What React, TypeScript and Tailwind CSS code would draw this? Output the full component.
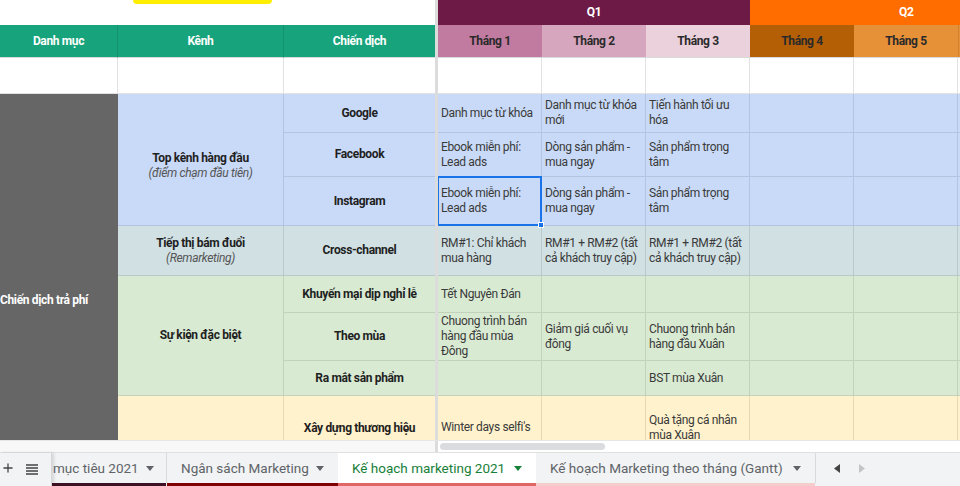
import { Plus } from "lucide-react"

type MonthRow = {
  h: string
  bg: string
  cells: string[]
  selected?: number
}

const monthRows: MonthRow[] = [
  { h: "h-[36px]", bg: "bg-white", cells: ["", "", ""] },
  { h: "h-[39px]", bg: "bg-[#c9daf8]", cells: ["Danh mục từ khóa", "Danh mục từ khóa mới", "Tiến hành tối ưu hóa"] },
  { h: "h-[44px]", bg: "bg-[#c9daf8]", cells: ["Ebook miễn phí: Lead ads", "Dòng sản phẩm - mua ngay", "Sản phẩm trọng tâm"] },
  { h: "h-[49px]", bg: "bg-[#c9daf8]", cells: ["Ebook miễn phí: Lead ads", "Dòng sản phẩm - mua ngay", "Sản phẩm trọng tâm"], selected: 0 },
  { h: "h-[50px]", bg: "bg-[#d0e0e3]", cells: ["RM#1: Chỉ khách mua hàng", "RM#1 + RM#2 (tất cả khách truy cập)", "RM#1 + RM#2 (tất cả khách truy cập)"] },
  { h: "h-[37px]", bg: "bg-[#d9ead3]", cells: ["Tết Nguyên Đán", "", ""] },
  { h: "h-[48px]", bg: "bg-[#d9ead3]", cells: ["Chuong trình bán hàng đầu mùa Đông", "Giảm giá cuối vụ đông", "Chuong trình bán hàng đầu Xuân"] },
  { h: "h-[35px]", bg: "bg-[#d9ead3]", cells: ["", "", "BST mùa Xuân"] },
  { h: "h-[64px]", bg: "bg-[#fff2cc]", cells: ["Winter days selfi's", "", "Quà tặng cá nhân mùa Xuân"] },
]

const months = [
  { label: "Tháng 1", bg: "bg-[#c27ba0]" },
  { label: "Tháng 2", bg: "bg-[#d5a6bd]" },
  { label: "Tháng 3", bg: "bg-[#ead1dc]" },
  { label: "Tháng 4", bg: "bg-[#b45f06]" },
  { label: "Tháng 5", bg: "bg-[#e69138]" },
]

function Caret({ className = "" }: { className?: string }) {
  return (
    <svg width="8" height="5" viewBox="0 0 8 5" className={className}>
      <path d="M0 0h8L4 5z" fill="currentColor" />
    </svg>
  )
}

function Tab({
  label,
  width,
  stripe,
  active,
}: {
  label: string
  width: string
  stripe: string
  active?: boolean
}) {
  return (
    <div className={`${width} shrink-0 flex flex-col ${active ? "bg-white" : ""}`}>
      <div
        className={`h-[30px] flex items-center justify-between pl-[14px] pr-[14px] whitespace-nowrap ${
          active ? "text-[#188038]" : "text-[#5f6368]"
        }`}
      >
        <span>{label}</span>
        <Caret />
      </div>
      <div className={`h-[4px] ${stripe}`} />
    </div>
  )
}

export default function App() {
  return (
    <div className="w-[960px] h-[486px] overflow-hidden bg-white flex flex-col font-['Roboto','Noto_Sans',sans-serif]">
      {/* bảng tính */}
      <div className="h-[440px] flex overflow-hidden shrink-0 tracking-[-0.35px]">
        {/* cột cố định */}
        <div className="w-[435px] shrink-0 grid grid-cols-[118px_166px_151px] grid-rows-[25px_33px_36px_39px_44px_49px_50px_37px_48px_35px_64px] text-[12px] leading-[15px]">
          <div className="col-span-3 row-start-1 bg-white">
            <div className="ml-[133px] w-[139px] h-[4px] bg-[#ffee00] rounded-b-[6px]" />
          </div>

          <div className="col-start-1 row-start-2 bg-[#17a37c] border-r border-black/10 border-b border-b-[#d9d9d9] flex items-center justify-center font-bold text-white">
            Danh mục
          </div>
          <div className="col-start-2 row-start-2 bg-[#17a37c] border-r border-black/10 border-b border-b-[#d9d9d9] flex items-center justify-center font-bold text-white">
            Kênh
          </div>
          <div className="col-start-3 row-start-2 bg-[#17a37c] border-b border-b-[#d9d9d9] flex items-center justify-center font-bold text-white">
            Chiến dịch
          </div>

          <div className="col-start-1 row-start-3 border-r border-b border-[#e2e2e2]" />
          <div className="col-start-2 row-start-3 border-r border-b border-[#e2e2e2]" />
          <div className="col-start-3 row-start-3 border-b border-[#e2e2e2]" />

          <div className="col-start-1 row-start-4 row-span-8 bg-[#666666] flex items-center pt-[46px] font-bold text-white whitespace-nowrap">
            Chiến dịch trả phí
          </div>

          <div className="col-start-2 row-start-4 row-span-3 bg-[#c9daf8] border-r border-b border-black/10 flex flex-col items-center justify-center pt-3 text-[#1f1f1f]">
            <span className="font-bold">Top kênh hàng đầu</span>
            <span className="italic text-[#555]">(điểm chạm đầu tiên)</span>
          </div>
          <div className="col-start-2 row-start-7 bg-[#d0e0e3] border-r border-b border-black/10 flex flex-col items-center justify-center text-[#1f1f1f]">
            <span className="font-bold">Tiếp thị bám đuổi</span>
            <span className="italic text-[#555]">(Remarketing)</span>
          </div>
          <div className="col-start-2 row-start-8 row-span-3 bg-[#d9ead3] border-r border-b border-black/10 flex items-center justify-center font-bold text-[#1f1f1f]">
            Sự kiện đặc biệt
          </div>
          <div className="col-start-2 row-start-11 bg-[#fff2cc] border-r border-black/10" />

          <div className="col-start-3 row-start-4 bg-[#c9daf8] border-b border-black/10 flex items-center justify-center font-bold text-[#1f1f1f]">
            Google
          </div>
          <div className="col-start-3 row-start-5 bg-[#c9daf8] border-b border-black/10 flex items-center justify-center font-bold text-[#1f1f1f]">
            Facebook
          </div>
          <div className="col-start-3 row-start-6 bg-[#c9daf8] border-b border-black/10 flex items-center justify-center font-bold text-[#1f1f1f]">
            Instagram
          </div>
          <div className="col-start-3 row-start-7 bg-[#d0e0e3] border-b border-black/10 flex items-center justify-center font-bold text-[#1f1f1f]">
            Cross-channel
          </div>
          <div className="col-start-3 row-start-8 bg-[#d9ead3] border-b border-black/10 flex items-center justify-center font-bold text-[#1f1f1f]">
            Khuyến mại dịp nghỉ lễ
          </div>
          <div className="col-start-3 row-start-9 bg-[#d9ead3] border-b border-black/10 flex items-center justify-center font-bold text-[#1f1f1f]">
            Theo mùa
          </div>
          <div className="col-start-3 row-start-10 bg-[#d9ead3] border-b border-black/10 flex items-center justify-center font-bold text-[#1f1f1f]">
            Ra mắt sản phẩm
          </div>
          <div className="col-start-3 row-start-11 bg-[#fff2cc] flex items-center justify-center font-bold text-[#1f1f1f]">
            Xây dựng thương hiệu
          </div>
        </div>

        {/* đường cố định */}
        <div className="w-[3px] shrink-0 bg-[#dcdcdc]" />

        {/* các tháng */}
        <div className="flex-1 flex flex-col text-[12px] leading-[15px] overflow-hidden">
          <div className="h-[25px] flex shrink-0 font-bold text-white">
            <div className="w-[312px] shrink-0 bg-[#6e1a47] flex items-center justify-center">Q1</div>
            <div className="flex-1 bg-[#ff6d01] flex items-center pl-[149px]">Q2</div>
          </div>
          <div className="h-[33px] flex shrink-0 font-bold text-[#2a2a2a] border-b border-[#d9d9d9]">
            {months.map((m) => (
              <div key={m.label} className={`w-[104px] shrink-0 ${m.bg} flex items-center justify-center`}>
                {m.label}
              </div>
            ))}
            <div className="flex-1 bg-[#e69138] border-l border-black/10" />
          </div>
          {monthRows.map((row, i) => (
            <div key={i} className={`${row.h} flex shrink-0 ${row.bg} text-[#3a3a3a]`}>
              {[0, 1, 2, 3, 4].map((c) => (
                <div
                  key={c}
                  className={`relative w-[104px] shrink-0 border-r border-b ${
                    row.bg === "bg-white" ? "border-[#e2e2e2]" : "border-black/10"
                  } px-[3px] flex items-center`}
                >
                  <span>{row.cells[c] ?? ""}</span>
                  {row.selected === c && (
                    <div className="absolute -left-px -top-px w-[105px] h-[50px] border-2 border-[#1a73e8]">
                      <div className="absolute -right-[4px] -bottom-[4px] w-[6px] h-[6px] bg-[#1a73e8] border border-white" />
                    </div>
                  )}
                </div>
              ))}
              <div className={`flex-1 border-b ${row.bg === "bg-white" ? "border-[#e2e2e2]" : "border-black/10"}`} />
            </div>
          ))}
        </div>
      </div>

      {/* thanh cuộn ngang */}
      <div className="h-[12px] flex shrink-0 border-t border-[#e6e6e6]">
        <div className="w-[435px] shrink-0 bg-[#f8f8f8]" />
        <div className="w-[3px] shrink-0 bg-[#dcdcdc]" />
        <div className="flex-1 flex items-center pl-[2px]">
          <div className="w-[165px] h-[7px] rounded-full bg-[#dadce0]" />
        </div>
      </div>

      {/* thanh trang tính */}
      <div className="flex-1 flex bg-[#f1f3f4] text-[13.5px] border-t border-[#e0e0e0]">
        <div className="w-[52px] shrink-0 flex items-start pt-[8px] pl-[1px] gap-[11px] text-[#444] border-r border-[#d6d6d6] shadow-[2px_0_3px_rgba(0,0,0,0.12)]">
          <Plus size={14} strokeWidth={2.2} />
          <svg width="12" height="14" viewBox="0 0 12 14" className="mt-[1px]">
            <path d="M0 3h12M0 6h12M0 9h12M0 12h12" stroke="currentColor" strokeWidth="1.6" />
          </svg>
        </div>
        <div className="w-[114px] shrink-0 flex flex-col">
          <div className="h-[30px] flex items-center justify-between pl-[1px] pr-[12px] text-[#5f6368] whitespace-nowrap">
            <span>mục tiêu 2021</span>
            <Caret />
          </div>
          <div className="h-[4px] bg-[#3e1024]" />
        </div>
        <div className="w-px bg-[#dadada] h-[30px]" />
        <Tab label="Ngân sách Marketing" width="w-[171px]" stripe="bg-[#7f0000]" />
        <Tab label="Kế hoạch marketing 2021" width="w-[198px]" stripe="bg-[#e06666]" active />
        <Tab label="Kế hoạch Marketing theo tháng (Gantt)" width="w-[279px]" stripe="bg-[#f4cccc]" />
        <div className="w-px bg-[#dadada] h-[30px]" />
        <div className="flex items-start pt-[11px] pl-[18px] gap-[19px]">
          <svg width="6" height="9" viewBox="0 0 6 9">
            <path d="M6 0v9L0 4.5z" fill="#444" />
          </svg>
          <svg width="6" height="9" viewBox="0 0 6 9">
            <path d="M0 0v9l6-4.5z" fill="#c4c4c4" />
          </svg>
        </div>
      </div>
    </div>
  )
}
